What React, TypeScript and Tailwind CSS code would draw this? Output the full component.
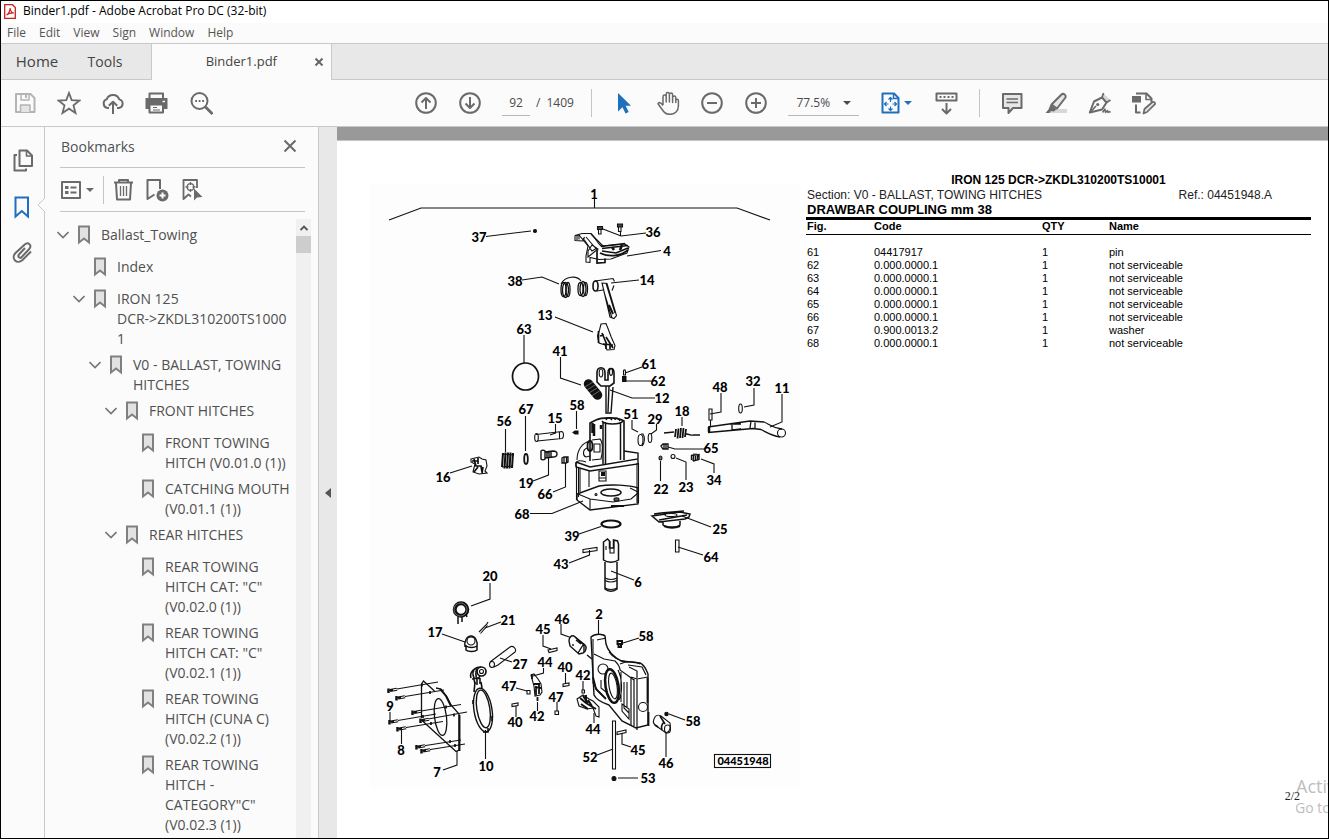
import React from "react";

type IconProps = { children: React.ReactNode; className?: string; box?: string };

function Icon({ children, className = "size-6", box = "0 0 24 24" }: IconProps) {
  return (
    <svg
      viewBox={box}
      className={`shrink-0 ${className}`}
      fill="none"
      stroke="currentColor"
      strokeWidth={2}
      strokeLinejoin="round"
      aria-hidden="true"
    >
      {children}
    </svg>
  );
}

function ToolButton({ label, children, className = "" }: { label: string; children: React.ReactNode; className?: string }) {
  return (
    <button type="button" aria-label={label} className={`flex shrink-0 items-center justify-center ${className}`}>
      {children}
    </button>
  );
}

function Toolbar() {
  return (
    <div className="flex h-[47px] shrink-0 items-center border-b border-[#c9c9c9] bg-[#fbfbfb] pl-3 text-[#6a6a6a]">
      <div className="flex gap-5">
        <ToolButton label="Save" className="text-[#b4b4b4]">
          <Icon>
            <path d="M3 3h14.500l4 4v14H3z" />
            <path d="M8 3v6h8V3" strokeWidth="1.500" />
            <path d="M13 4v3" />
            <path d="M7.500 21v-7h9.500v7" fill="#e4e4e4" strokeWidth="1.500" />
          </Icon>
        </ToolButton>
        <ToolButton label="Star">
          <Icon>
            <path d="M12 2l2.700 7.100 7.800.400-6 4.900 2 7.600-6.500-4.300L5.500 22l2-7.600-6-4.900 7.800-.400z" strokeWidth="1.800" strokeLinejoin="miter" />
          </Icon>
        </ToolButton>
        <ToolButton label="Upload to cloud">
          <Icon>
            <path d="M8 17H6.500A4.500 4.500 0 0 1 5.700 8.300 6.700 6.700 0 0 1 18.300 8.400 4.400 4.400 0 0 1 18 17h-2" />
            <path d="M12 23V11M7.800 14.800L12 10.700l4.200 4.100" />
          </Icon>
        </ToolButton>
        <ToolButton label="Print">
          <Icon>
            <path d="M4.500 8V2.500h13.500V8" />
            <path d="M.500 7h22v11h-4v-2h-14v2h-4z" fill="currentColor" stroke="none" />
            <path d="M4.500 13.500h13.500V21.500H4.500z" fill="#fbfbfb" />
            <path d="M8 16.500h4M8 19h7" strokeWidth="1.200" />
            <path d="M17.500 10.500h2.500" stroke="#fbfbfb" strokeWidth="1.500" />
          </Icon>
        </ToolButton>
        <ToolButton label="Find text">
          <Icon>
            <circle cx="10.500" cy="10" r="8" />
            <path d="M16.500 16l7 7" strokeWidth="2.800" />
            <path d="M6.200 10h1.800M9.700 10h1.800M13.200 10H15" />
          </Icon>
        </ToolButton>
      </div>

      <div className="ml-[201px] flex items-center gap-5">
        <ToolButton label="Previous page">
          <Icon>
            <circle cx="12" cy="12" r="9.800" />
            <path d="M12 18V7M7.500 11.500L12 7l4.500 4.500" />
          </Icon>
        </ToolButton>
        <ToolButton label="Next page">
          <Icon>
            <circle cx="12" cy="12" r="9.800" />
            <path d="M12 6v11M7.500 12.500L12 17l4.500-4.500" />
          </Icon>
        </ToolButton>
      </div>
      <div className="ml-5 flex items-center text-[12px] text-[#4a4a4a]">
        <input
          aria-label="Page number"
          defaultValue="92"
          className="h-[26px] w-7 border-b border-[#b8b8b8] bg-transparent text-center outline-none"
        />
        <span className="ml-1.5">/</span>
        <span className="ml-1.5 w-7">1409</span>
      </div>
      <div className="ml-[17px] h-7 w-px bg-[#c4c4c4]" />

      <div className="ml-5 flex items-center gap-5">
        <ToolButton label="Select" className="text-[#1f6fbf]">
          <Icon>
            <path d="M6 2v18.500l4.500-4.300 3 6.300 3.200-1.500-3-6.200H19z" fill="currentColor" stroke="none" />
          </Icon>
        </ToolButton>
        <ToolButton label="Hand">
          <Icon>
            <path
              d="M7 14V5.700a1.600 1.600 0 0 1 3.200 0V11V3.200a1.600 1.600 0 0 1 3.200 0V11V3.700a1.600 1.600 0 0 1 3.200 0V11.500V6.700a1.600 1.600 0 0 1 3.200 0V11.500V9.500a1.300 1.300 0 0 1 2.600 0V15c0 5-3.500 8.300-8.300 8.300-3.700 0-6-1.600-7.600-4.300L2 12.800c.800-1.900 2.900-1.600 5 1.700"
              strokeWidth="1.500"
            />
          </Icon>
        </ToolButton>
        <ToolButton label="Zoom out">
          <Icon>
            <circle cx="12" cy="12" r="9.800" />
            <path d="M7 12h10" />
          </Icon>
        </ToolButton>
        <ToolButton label="Zoom in">
          <Icon>
            <circle cx="12" cy="12" r="9.800" />
            <path d="M7 12h10M12 7v10" />
          </Icon>
        </ToolButton>
      </div>
      <button type="button" aria-label="Zoom level" className="ml-5 flex h-[26px] w-[71px] items-center justify-between border-b border-[#b8b8b8] px-2 text-[12px] text-[#4a4a4a]">
        77.5%
        <Caret />
      </button>

      <button type="button" aria-label="Fit page" className="ml-5 flex items-center gap-px text-[#1f6fbf]">
        <Icon>
          <path d="M3.500 2.500H15L19.500 7V21.500h-16z" />
          <path d="M14.500 2.500V7.500h5" strokeWidth="1.500" />
          <path
            d="M11.500 11V6.500M9.500 8.500l2-2 2 2M11.500 15.500V19M9.500 17.500l2 2 2-2M9.500 13H5.500M7.500 11l-2 2 2 2M13.500 13h4M15.500 11l2 2-2 2"
            strokeWidth="1.200"
          />
        </Icon>
        <Caret />
      </button>
      <ToolButton label="Scroll mode" className="ml-[23px]">
        <Icon>
          <path d="M1.500 2.500h20v7h-20z" />
          <path d="M4.500 6h14" strokeDasharray="2 2" />
          <path d="M11.500 12v10M7 18l4.500 4.500L16 18" />
        </Icon>
      </ToolButton>
      <div className="ml-5 h-7 w-px bg-[#c4c4c4]" />
      <div className="ml-5 flex items-center gap-5">
        <ToolButton label="Add comment">
          <Icon>
            <path d="M3 3h18.500v14H13l-4.500 5v-5H3z" fill="#e6e6e6" />
            <path d="M6.500 8h11.500M6.500 11.500h11.500" strokeWidth="1.300" />
          </Icon>
        </ToolButton>
        <ToolButton label="Highlight">
          <Icon>
            <path d="M8 18h15v4H5z" fill="#d8d8d8" stroke="none" />
            <path d="M17.500 3.500c2-1.600 5 .600 4 3L13 17.500l-5.500-4z" fill="#e6e6e6" />
            <path d="M6.500 13.500l6 4.500-2.500 2.500-3-.500-1.500 2H1.500l3-3.500z" fill="currentColor" stroke="none" />
          </Icon>
        </ToolButton>
        <ToolButton label="Sign">
          <Icon>
            <path d="M15.500 2.500l6.500 6-3 2-5-4.500z" fill="#d8d8d8" stroke="none" />
            <path d="M1.800 21.500L6 10.500l8-4 4.500 5-4.500 7z" />
            <path d="M14 6.500l1.500-4.500M18.500 11.500l4-2.500M2 21.500l6-6.500" strokeWidth="1.700" />
            <circle cx="9.700" cy="13.500" r="1.600" fill="currentColor" stroke="none" />
            <path d="M14.500 21.500l2.500-3.500.500 3.500 2-2 .500 2 1.500-1 1 1" strokeWidth="1.500" />
          </Icon>
        </ToolButton>
        <ToolButton label="More tools">
          <Icon>
            <path d="M4 2.500h10.500l5 5V11M4 13.500v8h4.500" />
            <path d="M14 2.500v6h5.500" strokeWidth="1.600" />
            <path d="M0 5h9v6.500H0z" fill="currentColor" stroke="none" />
            <path d="M11.500 22.500l1-4.500 8-7c1.500-.500 3 .800 2.500 2.200L15 21z" fill="#e6e6e6" strokeWidth="1.700" />
          </Icon>
        </ToolButton>
      </div>
    </div>
  );
}

function Caret() {
  return (
    <svg viewBox="0 0 8 5" className="h-1 w-2 shrink-0" preserveAspectRatio="none" aria-hidden="true">
      <path d="M0 0h8L4 5z" fill="currentColor" />
    </svg>
  );
}

type Bookmark = { level: 0 | 1 | 2 | 3 | 4; open?: boolean; text: string };

const bookmarks: Bookmark[] = [
  { level: 0, open: true, text: "Ballast_Towing" },
  { level: 1, text: "Index" },
  { level: 1, open: true, text: "IRON 125\nDCR->ZKDL310200TS1000\n1" },
  { level: 2, open: true, text: "V0 - BALLAST, TOWING\nHITCHES" },
  { level: 3, open: true, text: "FRONT HITCHES" },
  { level: 4, text: "FRONT TOWING\nHITCH (V0.01.0 (1))" },
  { level: 4, text: "CATCHING MOUTH\n(V0.01.1 (1))" },
  { level: 3, open: true, text: "REAR HITCHES" },
  { level: 4, text: 'REAR TOWING\nHITCH CAT: "C"\n(V0.02.0 (1))' },
  { level: 4, text: 'REAR TOWING\nHITCH CAT: "C"\n(V0.02.1 (1))' },
  { level: 4, text: "REAR TOWING\nHITCH (CUNA C)\n(V0.02.2 (1))" },
  { level: 4, text: 'REAR TOWING\nHITCH -\nCATEGORY"C"\n(V0.02.3 (1))' },
];

const indents = ["pl-0", "pl-4", "pl-8", "pl-12", "pl-16"];

function BookmarkRow({ level, open, text }: Bookmark) {
  return (
    <li className={`flex min-h-8 items-start py-[3px] ${indents[level]}`}>
      <span className="flex h-5 w-[21px] shrink-0 items-center">
        {open && (
          <button type="button" aria-label="Collapse">
            <svg viewBox="0 0 12 8" className="h-2 w-3 text-[#777]" fill="none" stroke="currentColor" strokeWidth="1.600" aria-hidden="true">
              <path d="M.500 1L6 6.500 11.500 1" />
            </svg>
          </button>
        )}
      </span>
      <svg viewBox="0 0 12 20" className="h-5 w-3 shrink-0" fill="#e2e2e2" stroke="#808080" strokeWidth="2" aria-hidden="true">
        <path d="M1 1.500h10V17.500l-5-4-5 4z" />
      </svg>
      <a href="#" className="ml-[11px] whitespace-pre text-[14px] leading-5 text-[#505050]">
        {text}
      </a>
    </li>
  );
}

function SidePanel() {
  return (
    <aside className="flex w-[273px] shrink-0 flex-col overflow-hidden bg-[#fbfbfb] text-[#6a6a6a]">
      <div className="mr-[13px] ml-[15px] flex h-[41px] shrink-0 items-center justify-between border-b border-[#c4c4c4] pr-2 pb-0.5 pl-px">
        <h2 className="text-[14px] text-[#505050]">Bookmarks</h2>
        <ToolButton label="Close panel">
          <Icon className="h-3.5 w-3.5" box="0 0 14 14">
            <path d="M1.500 1.500l11 11M12.500 1.500l-11 11" />
          </Icon>
        </ToolButton>
      </div>
      <div className="mr-[13px] ml-[15px] flex h-11 shrink-0 items-center border-b border-[#c4c4c4]">
        <button type="button" aria-label="Options" className="flex items-center gap-1">
          <Icon className="h-6 w-[22px]" box="0 0 22 24">
            <path d="M2 4h18v16H2z" />
            <path d="M5 9.500h3.500M5 14.500h3.500" strokeWidth="3" />
            <path d="M10.500 9.500h6M10.500 14.500h6" />
          </Icon>
          <Caret />
        </button>
        <div className="mr-2 ml-[9px] h-7 w-px bg-[#c4c4c4]" />
        <div className="flex gap-2.5">
          <ToolButton label="Delete">
            <Icon>
              <path d="M2 4.500h19" />
              <path d="M7 4.500V2h9v2.500" />
              <path d="M4 5l1 16.500h13L19 5" />
              <path d="M8.500 8V18M11.500 8V18M14.500 8V18" strokeWidth="1.300" />
            </Icon>
          </ToolButton>
          <ToolButton label="New bookmark">
            <Icon>
              <path d="M8.500 16.500L1.500 21V2h12.500v9" />
              <circle cx="16.500" cy="17.500" r="6" fill="currentColor" stroke="none" />
              <path d="M13.500 17.500h6M16.500 14.500v6" stroke="#fbfbfb" />
            </Icon>
          </ToolButton>
          <ToolButton label="Find current bookmark">
            <Icon>
              <path d="M17 10V2H3.500v19l5-4.500 2.500 2" strokeWidth="1.800" />
              <circle cx="10.500" cy="9" r="3.300" strokeWidth="1.300" />
              <path d="M10.500 4v3M10.500 11v3M5.500 9h3M12.500 9h3" strokeWidth="1.300" />
              <path d="M14 10.500v12l3-3 5.500-.500z" fill="currentColor" stroke="none" />
            </Icon>
          </ToolButton>
        </div>
      </div>
      <div className="flex min-h-0 flex-1 pt-[7px]">
        <ul className="min-w-0 flex-1 overflow-hidden pt-[3px] pl-3">
          {bookmarks.map((b, i) => (
            <BookmarkRow key={i} {...b} />
          ))}
        </ul>
        <div className="mr-[7px] flex w-[15px] flex-col bg-[#f0f0f0]">
          <button type="button" aria-label="Scroll up" className="flex h-[17px] items-center justify-center">
            <svg viewBox="0 0 8 6" className="h-1.5 w-2" fill="none" stroke="#505050" strokeWidth="1.800" aria-hidden="true">
              <path d="M.500 5L4 1.500 7.500 5" />
            </svg>
          </button>
          <div className="h-[17px] bg-[#cdcdcd]" />
        </div>
      </div>
    </aside>
  );
}

function Rail() {
  return (
    <nav className="flex w-11 shrink-0 flex-col items-center gap-[22px] border-r border-[#c9c9c9] bg-[#fbfbfb] pt-[22px] text-[#6a6a6a]">
      <ToolButton label="Page thumbnails">
        <Icon>
          <path d="M8.500 1.500h7.500l5 5V17H8.500z" />
          <path d="M15.500 1.500v5.500H21" strokeWidth="1.600" />
          <path d="M6 6H3.500v15.500h11.500V19.500" />
        </Icon>
      </ToolButton>
      <div className="relative flex w-full justify-center">
        <ToolButton label="Bookmarks" className="text-[#1f6fbf]">
          <Icon>
            <path d="M4.500 2.500h12.500v19l-6.200-5.500-6.300 5.500z" strokeLinejoin="miter" />
          </Icon>
        </ToolButton>
        <svg viewBox="0 0 8 14" className="absolute top-[3px] -right-px h-3.5 w-2" aria-hidden="true">
          <path d="M8 0L1 7l7 7" fill="#fbfbfb" stroke="#c9c9c9" />
        </svg>
      </div>
      <ToolButton label="Attachments">
        <Icon>
          <path
            d="M14 7l-6 6.500c-2 2.300.800 4.500 2.700 2.500l7.500-8c3.500-4-1.200-7.500-4.700-4.300L4.500 12c-5 5.500 1.500 12 7 7L20 10.500"
            strokeWidth="2"
          />
        </Icon>
      </ToolButton>
    </nav>
  );
}

const labels: [string, number, number][] = [
  ["1", 594, 194], ["37", 479, 237], ["36", 653, 232], ["4", 667, 251], ["38", 515, 281], ["14", 647, 280],
  ["13", 545, 315], ["63", 524, 329], ["41", 560, 351], ["61", 649, 364], ["62", 658, 381], ["12", 662, 398],
  ["58", 577, 405], ["15", 555, 418], ["67", 526, 409], ["56", 504, 421], ["51", 631, 414], ["29", 655, 419],
  ["18", 682, 411], ["48", 720, 387], ["32", 753, 381], ["11", 782, 388], ["16", 443, 477], ["19", 526, 483],
  ["66", 545, 494], ["65", 711, 448], ["22", 661, 489], ["23", 686, 487], ["34", 714, 480], ["68", 522, 514],
  ["25", 720, 529], ["39", 572, 536], ["43", 561, 564], ["64", 711, 557], ["6", 638, 582], ["20", 490, 576],
  ["2", 599, 614], ["21", 508, 620], ["17", 435, 632], ["46", 562, 619], ["45", 543, 629], ["58", 646, 636],
  ["44", 545, 662], ["40", 565, 667], ["42", 583, 675], ["27", 520, 664], ["47", 509, 686], ["47", 556, 697],
  ["42", 537, 716], ["40", 515, 722], ["9", 390, 706], ["8", 401, 750], ["10", 486, 766], ["7", 437, 772],
  ["44", 593, 729], ["58", 693, 721], ["45", 638, 750], ["46", 666, 763], ["52", 590, 757], ["53", 648, 778],
];

const leaders =
  "M389 220L421 208H737L770 220M594.500 199V208M486 236.500L531 231M646 233L621 236 603 229M620.500 232V236M661 250.500L627 256M522 280L542 277 559 284M639 280L611 283M555 317L593 332M524 335V363M560.500 357V378L581 385M642 367L625 373M651 381H626M655 398H632L610 390M576.500 411V429M555.500 424V433L550 435M525.500 416V451M505.500 429V452M632 420V429L638 432M656.500 424V430L651 434M682 417V426M721 393V412L710 414M754 388V405L744 407M782 394V422L770 427M450 473L472 466M533 481L548.500 475V458M553 492L565.500 487V463M705 449H675L668 447M660.500 481V461M686 480V462L676 458M714 473V464L701 459M530 513.500H552L583 501M711 527L682 516M579 534L601 526.500M569 563L589.500 555V550M703 555L678 547M634 580L611 571M490 583V599L471 606M598.500 620V636M501 622L485 628M442 634L465 642M561 624V634L572 638M543 635V646L551 649M639 638L623 643M543.500 668V673L533 676M565.500 673V683M583 681V690M512 662L500 658M516 688L527 691M557 702V711M537.500 711V702M516 717V706M390 712V721M401.500 744V730M485.500 759V730M443 770L457 765V751M594 723V713M685 720L669 714M631 747L622 744V733M666 757V730M597 755L613 749M638 778H618";

const plateBolts: [number, number, number, number][] = [
  [388, 690.5, 438, 682], [396, 698, 444, 690], [412, 712.5, 461, 704.5], [389, 722, 436, 714],
  [420, 720.5, 467, 712], [397, 729, 443, 721.5], [416, 747, 461, 740], [421, 751, 465, 744],
];

function PartsDrawing() {
  return (
    <svg viewBox="370 184 430 604" className="h-[604px] w-[430px] shrink-0" role="img" aria-label="Exploded view of the drawbar coupling">
      <rect x="370" y="184" width="430" height="604" fill="#fdfdfd" />
      <g fill="none" stroke="#111" strokeWidth="1.100">
        <path d={leaders} />
        {/* 37, 36: screws */}
        <circle cx="535" cy="231" r="1.500" fill="#111" />
        <path d="M597.500 226.500h5v3h-5zM617.500 224h5v3h-5z" fill="#444" />
        <path d="M598.500 229.500v4.500h2.500v-4.500M618.500 227v4.500h2.500v-4.500" />
        {/* 4: lever plate */}
        <path d="M575 235.500l7-2h9c4 4 6 9 10 12.500l24-2 4 3-2 6-16 6-12 .500-9-2v5l-4-.500v-6l2-10-9-11-4 .500z" />
        <path d="M575 235.500v5l8 .500 1.500-4M577 235v5M579 234.500v5M583 238l9 13 5-3M586 237l12 14M591 234l13 13M588 251l4-6 6 4-10 8z" />
        <path d="M601 246.500l24-3M602 248.500l26-3M600 253c8 4 20 4 28-3M602 251l14 2 12-5M597 251v12l8-.500v-4" strokeWidth="1.700" />
        <path d="M612 247l2 3M622 245l-2 5" strokeWidth="2.500" />
        {/* 38: double spring */}
        <path d="M561 284c4-8 16-9 20-3" />
        <g strokeWidth="1.300">
          <ellipse cx="563.500" cy="289.500" rx="2.500" ry="7" />
          <ellipse cx="565.500" cy="290" rx="3" ry="7.500" />
          <ellipse cx="568" cy="289.500" rx="2" ry="7" />
          <ellipse cx="580.500" cy="289" rx="2.500" ry="6.500" />
          <ellipse cx="583" cy="289" rx="3" ry="7.500" />
          <ellipse cx="585.500" cy="289" rx="2" ry="6.500" />
        </g>
        {/* 14: arm */}
        <ellipse cx="595.500" cy="286" rx="2.500" ry="5" strokeWidth="1.600" />
        <path d="M595 281l18-2.500 1.500 3M597 291l6-1M612 290.500l2-5M602 283l8 34 4 1.500 2.500-3-9.500-32zM606 283l9 30M604 292l8 26" />
        <path d="M609 305l4 9" strokeWidth="2" />
        {/* 13: pawl */}
        <path d="M601 324l5-.500 2 5 3 8 4 9-1 4-7 .500-2-5-6-2-1.500-7 2-6z" />
        <path d="M598.500 331v12M602 333l5 12M606 337l7 11M600 336l4-1M603 344l10 1M606 345v4M610 343v6" strokeWidth="1.700" />
        {/* 63: ring */}
        <ellipse cx="525.500" cy="376.500" rx="13" ry="13.500" strokeWidth="1.700" />
        {/* 41: spring */}
        <path d="M588.500 384l9 11" strokeWidth="9.500" strokeLinecap="round" />
        <path d="M585 387l8-5M587 390l8-5M589 393l8-5M591.500 396l8-5" strokeWidth=".500" stroke="#bbb" />
        {/* 12: fork rod */}
        <path d="M597 373c0-7 8-7 8 0v7h3v-7c0-6 6-6 6 0v10l-4 3h-9l-4-4z" strokeWidth="1.600" />
        <ellipse cx="601" cy="373" rx="1.800" ry="4" />
        <ellipse cx="611" cy="372" rx="1.500" ry="3.500" />
        <path d="M606 386v27h5l2-26M609 386l-1 26" strokeWidth="1.400" />
        {/* 61, 62: pin and spring */}
        <path d="M623.500 371c0-1.500 2-1.500 2 0v4h-2z" />
        <path d="M622 377h4.500M622 379h4.500M622 381h4.500" strokeWidth="1.800" />
        {/* 15: pin */}
        <path d="M536 434.500l26-3M537 441l25-2.500M562 431.500c2 1 2 6 0 7M559.500 432v6.500" />
        <ellipse cx="536.500" cy="437.500" rx="1.800" ry="4" />
        {/* 58: nipple */}
        <path d="M573 432.500l2-1.500h3v3h-3z" fill="#111" />
        {/* 67: washer */}
        <ellipse cx="526" cy="459" rx="1.800" ry="5" strokeWidth="1.800" />
        {/* 56: spring */}
        <path d="M503 453l-1 14M505.500 452.500l-1 16M508 452.500l-1 16M510.500 452.500l-1 16M513 453l-1 15" strokeWidth="2" />
        <path d="M502 454l12 1M502 467l11-1" />
        {/* 16: detent */}
        <path d="M471 459l8-2 3 2 4 1 1 6-2 5 2 2-8 1-6-2 2-8-4-2z" fill="#fff" />
        <path d="M474 459l2 7h5l1 6M478 458v6M472 461h6M474 472l4-5M483 467l-1 6" strokeWidth="1.700" />
        {/* 19: bolt */}
        <path d="M541 451c1-1 3-1 4 0v8c-1 1-3 1-4 0zM545 452l8-1c3 0 4 1.500 4 3s-1 3-4 3l-8 1M547 452v6M549 451.500v6M551 451.500v6" strokeWidth="1.400" />
        {/* 66, 65: bushings */}
        <path d="M562 458l2-1h4v5l-2 1h-4zM564 457v6M566.500 457v6M661 446l2-2h5v5h-5zM664 444v5M666 444v5" strokeWidth="1.300" />
        {/* 68: coupling body */}
        <path d="M590 461v-38l6-3c6-3 22-3 28 1v39" strokeWidth="1.600" fill="#fff" />
        <path d="M603 422v42M605.500 422v42M620.500 422v38M602 421c3 4 18 4 21 0M606 420c1-3 4-3 6 0M615 420c0-3 4-2 5 1" strokeWidth="1.500" />
        <path d="M594 424v12M592.500 423v10M601 425v4" strokeWidth="2.500" />
        <path d="M586 462c-6-2-11-2-10 4M590 441c-8 2-13 9-13 19M587 448c-5 2-4 8-1 9l4-1M592 440l8-1c3 3 3 12 1 20l-9 1M594 444h6v8h-6z" />
        <ellipse cx="590" cy="446" rx="2.500" ry="5" strokeWidth="1.800" />
        <path d="M576 462l14 5 48-8v-6l-14-2M576 462v5l14 4 48-7v-5" strokeWidth="1.400" />
        <path d="M576.500 466v34M578.500 467v30M580 468v24M589 471v16M637 463v40M638.500 463v40" />
        <path d="M599 471h7v10h-7zM599 478h7" />
        <path d="M601 473h4M601 475h4" strokeWidth="2" />
        <path d="M577 500v-6l22-8c12-2 30-1 39 2v16l-48 6z" strokeWidth="1.400" />
        <path d="M578 494l12 5 23 3 18-3 7-6M590 499v10M630 488l8 4" />
        <ellipse cx="611" cy="492.500" rx="10" ry="3.500" strokeWidth="1.500" />
        <circle cx="596" cy="494.500" r="1" />
        <ellipse cx="616.500" cy="499.500" rx="2.500" ry="1.800" fill="#555" />
        <path d="M611 506h13" strokeWidth="2" />
        {/* 51, 29, 18 */}
        <ellipse cx="640.500" cy="440" rx="2.500" ry="5.500" />
        <path d="M641 434h2c2 3 2 9-1 12" />
        <ellipse cx="650" cy="438" rx="1.800" ry="4.500" />
        <path d="M664 433l10-1M686 434c4 0 5 2 7 1h7" strokeWidth="1.300" />
        <path d="M676 429l-1 8M678.500 428.500l-1 10M681 428l-1 10M683.500 428l-1 10M686 429l-1 8" strokeWidth="1.800" />
        {/* 48, 32, 11 */}
        <path d="M709 409h3v11h-3zM710.500 420v6" />
        <ellipse cx="740.500" cy="408.500" rx="1.800" ry="4.500" />
        <path d="M708 427l42-6 14 1c5 2 8 6 18 7M708 432.500l45-4 8 1c6 3 10 6 19 7.500M732 424v6l9-1M751 421l-1 7M755 421v7M733 424h8" strokeWidth="1.300" />
        <path d="M709 427v5" strokeWidth="2.500" />
        <circle cx="781.500" cy="433" r="4" />
        {/* 22, 23, 34 */}
        <ellipse cx="660.500" cy="458" rx="1.500" ry="2" fill="#777" />
        <circle cx="673" cy="456.500" r="2" />
        <path d="M691.500 455v5M694 453.500l-1 7.500M696 453.500l-1 8M698 454l-1 7M691 455.500l8-1v5l-6 1.500" strokeWidth="1.400" />
        {/* 39: ring */}
        <ellipse cx="611" cy="524" rx="9.500" ry="3.500" strokeWidth="2.200" />
        {/* 25: flange */}
        <path d="M652 516l28-4 10 2-1 3-4 2-26 3zM654 514l7-1 23-2M663 522v3c4 3 14 3 17 0v-4M659 520l28-5" strokeWidth="1.500" />
        <ellipse cx="671" cy="515" rx="6" ry="1.500" fill="#fff" />
        <path d="M664 526c5 2 11 2 16 0" strokeWidth="2.200" />
        {/* 43, 64 */}
        <path d="M583 549.500l14-2v3l-14 2zM675.500 540h3.500v12h-3.500z" />
        {/* 6: pivot pin */}
        <path d="M603.500 560v-18l4-3 2 2v7h4v-8l4 1 1 3v16c-4 3-11 3-15 0zM605 562v27c3 3 9 3 12 0v-27" strokeWidth="1.500" />
        <path d="M610 541v12h4v-12M606 546v4M605 578c4 2 8 2 12 0M605 580.500c4 2 8 2 12 0M605 588c3 2 9 2 12 0" />
        {/* 20: torsion spring */}
        <circle cx="461" cy="609.500" r="6.300" strokeWidth="4" />
        <circle cx="460.500" cy="609.500" r="6.500" stroke="#bbb" strokeWidth=".500" />
        <path d="M458 617v7M462 617v5M466 614l1 3" strokeWidth="1.500" />
        {/* 21, 17, 27 */}
        <path d="M479 632l8-8 1-2M480.500 633.500l7-8" />
        <circle cx="471" cy="641" r="4" />
        <path d="M465 647c-1-6 2-11 6-11s7 5 6 11M466 645v5c2 2 9 2 11 0v-5M466 646c3 2 8 2 11 0" strokeWidth="1.500" />
        <path d="M490 662l20-15c3-2 7 2 5 5l-17 13-4 2" />
        <ellipse cx="492" cy="664.500" rx="2.500" ry="3" />
        {/* 10: ring lever */}
        <circle cx="481.500" cy="671.500" r="4.500" strokeWidth="1.700" />
        <circle cx="481.500" cy="671.500" r="2" />
        <path d="M471 678c-2-6 4-11 10-11M472 679l6-1M474 670c-2 3-1 7 1 9M477 669c-2 3-1 8 0 10M480 676l-2 3M474 679l1 5M477 679v6M480 678v6" strokeWidth="1.600" />
        <ellipse cx="483" cy="710" rx="9" ry="22" transform="rotate(-9 483 710)" strokeWidth="1.400" />
        <ellipse cx="483.500" cy="709" rx="6.500" ry="19" transform="rotate(-9 483 710)" strokeWidth="1.400" />
        <path d="M475 682l-1 10M481 682l1 6M473 700v4M492 716v5M488 728v4h-5" strokeWidth="1.600" />
        {/* 7: plate with 8 and 9 bolts */}
        <path d="M421.500 718V684l2-3 11 10M436 688l5 1 6 8 4 8 8 9v36l-3 1.500-34-31" strokeWidth="1.300" />
        <path d="M440 689l6 7 5 10M459.500 715v36" strokeWidth="1.900" />
        <ellipse cx="440.500" cy="717" rx="6" ry="18.500" transform="rotate(-7 440 717)" strokeWidth="1.300" />
        {plateBolts.map(([x1, y1, x2, y2]) => (
          <g key={`${x1}-${y1}`}>
            <path d={`M${x1} ${y1}L${x2} ${y2}`} />
            <path d={`M${x1 + 0.5} ${y1 - 2}v4.500`} strokeWidth="2.500" />
            <path d={`M${x1 + 2} ${y1}l7-1.300`} strokeWidth="3" />
            <path d={`M${x1 + 5} ${y1 - 0.5}l4-.800`} strokeWidth="1" stroke="#fff" />
            <path d={`M${x1 + 34} ${y1 - 7}v3`} strokeWidth="1.700" />
          </g>
        ))}
        {/* 45, 46: upper pins */}
        <path d="M548 650l9-2v2.500l-8 2z" />
        <path d="M569 641c0-3 2-6 5-5l11 9c2 2 1 7-2 8l-4 1-9-8z" fill="#fff" strokeWidth="1.400" />
        <path d="M575 637l9 8v7M583 645l-5 8M587 655l5 4M573 644v2M576 640l5 4" strokeWidth="1.400" />
        {/* 44, 42, 40, 47: latches and small pins */}
        <path d="M531 675l3-1 4 5 3 5 1 8-2 3-5 1-1-10z" />
        <path d="M532 674v5M534 684h6M535 687l6 1M536 686v9M539 683v11M537.500 697v4" strokeWidth="1.800" />
        <path d="M563 684l6-1v2.500l-6 1zM512 704l6-1v2.500l-6 1zM527 690.500h3v3.500h-3zM555 711h3.500v3.500h-3.500zM582 690h2.500v3h-2.500z" />
        <path d="M577 699l6-4 6 4 4 2 6 6v10l-3-1-3-8-6 1-8-3z" />
        <path d="M580 698l6 5 10 6M583 696l5 7M581 704l7 5M588 700l4 6M586 695v6" strokeWidth="2" />
        {/* 2: housing */}
        <path d="M591 637c4-4 12-3 14-1l1 8c2 8 8 13 15 17l19 2c5 2 6 7 8 11v51l-12 3-14-7-13-16c-6-2-13-6-15-10z" fill="#fff" strokeWidth="1.400" />
        <path d="M593 639v44l5 8 5 5M597 640c3-1 7-1 9-2M594 654l10 5 11 2c4 4 5 7 5 9l14 10M609 652c4 6 10 9 19 10" />
        <path d="M631 677l6 2 11-2M631 677v48M637 679v51M634 679v47M620 664c6-3 15-3 20 0M628 665l14 2 4 8M629 667l8 4v7" strokeWidth="1.200" />
        <circle cx="603" cy="669" r="5" />
        <ellipse cx="612" cy="686" rx="6.500" ry="17" transform="rotate(-9 612 686)" strokeWidth="2.500" fill="#fff" />
        <ellipse cx="613" cy="686" rx="4" ry="13" transform="rotate(-9 613 686)" />
        <circle cx="643" cy="707" r="4.500" />
        <path d="M618 670c4 8 5 22 1 30M621 672v30M624 682v26l5 5M627 682v26M601 680v8l5 4M622 704l7 5v10l-7-8z" />
        <path d="M648.500 712v14M593 677l3 12 10 10M647.500 678v25" strokeWidth="1.800" />
        {/* 58: nipples */}
        <path d="M617.500 641h4.500v3h-4.500zM618.500 645v2h2.500v-2" strokeWidth="2" />
        <circle cx="666.500" cy="714" r="1.700" fill="#111" />
        {/* 46: lower pin */}
        <path d="M655 717c2-3 4-2 6-1l9 7c1 4 0 9-4 10l-11-8c-2-2-2-5 0-8z" fill="#fff" />
        <path d="M660 716l5 8M664 722c-2 2-3 5-2 8M655 725l3 2" strokeWidth="1.600" />
        <ellipse cx="667.500" cy="729" rx="3" ry="4" />
        {/* 45, 52, 53 */}
        <path d="M617 732l9-2v2.500l-9 2z" />
        <path d="M612.500 721h3v48h-3z" />
        <circle cx="614" cy="778.500" r="2" fill="#111" />
        <rect x="714.500" y="754.500" width="56" height="13" />
      </g>
      <g fill="#000" fontFamily="Lato, sans-serif" fontWeight="900" fontSize="13" textAnchor="middle">
        {labels.map(([t, x, y]) => (
          <text key={`${t}-${x}-${y}`} x={x} y={y + 5}>
            {t}
          </text>
        ))}
        <text x="743" y="765" fontSize="11">
          04451948
        </text>
      </g>
    </svg>
  );
}

const parts: [string, string, string, string][] = [
  ["61", "04417917", "1", "pin"],
  ["62", "0.000.0000.1", "1", "not serviceable"],
  ["63", "0.000.0000.1", "1", "not serviceable"],
  ["64", "0.000.0000.1", "1", "not serviceable"],
  ["65", "0.000.0000.1", "1", "not serviceable"],
  ["66", "0.000.0000.1", "1", "not serviceable"],
  ["67", "0.900.0013.2", "1", "washer"],
  ["68", "0.000.0000.1", "1", "not serviceable"],
];

function DocumentPage() {
  return (
    <main className="relative flex min-w-0 flex-1 flex-col overflow-hidden bg-white">
      <div className="h-[14px] shrink-0 border-b border-[#c4c4c4] bg-[#999]" />
      <div className="flex gap-1.5 pt-[43px] pr-[17px] pl-[33px]">
        <PartsDrawing />
        <section className="-mt-[11px] min-w-0 flex-1 font-['Liberation_Sans',Arial,sans-serif] text-[11px] text-black">
          <h1 className="text-center text-[12px] leading-[15px] font-bold">IRON 125 DCR-&gt;ZKDL310200TS10001</h1>
          <div className="flex justify-between pr-[39px] pl-px text-[12px] leading-[15px] text-[#222]">
            <span>Section: V0 - BALLAST, TOWING HITCHES</span>
            <span>Ref.: 04451948.A</span>
          </div>
          <h2 className="pl-px text-[13px] leading-[14px] font-bold">DRAWBAR COUPLING mm 38</h2>
          <table className="w-full table-fixed border-collapse border-t-[3px] border-black text-left leading-[13px]">
            <colgroup>
              <col className="w-[67px]" />
              <col className="w-[168px]" />
              <col className="w-[67px]" />
              <col />
            </colgroup>
            <thead>
              <tr className="h-4 border-b border-black">
                <th className="p-0 pl-px align-top">Fig.</th>
                <th className="p-0 pl-px align-top">Code</th>
                <th className="p-0 pl-px align-top">QTY</th>
                <th className="p-0 pl-px align-top">Name</th>
              </tr>
            </thead>
            <tbody>
              {parts.map((row, i) => (
                <tr key={row[0]}>
                  {row.map((cell, c) => (
                    <td key={c} className={i ? "p-0 pl-px" : "p-0 pt-[11px] pl-px"}>
                      {cell}
                    </td>
                  ))}
                </tr>
              ))}
            </tbody>
          </table>
        </section>
      </div>
      <div className="absolute right-0 bottom-5 w-8 overflow-hidden whitespace-nowrap text-[#bdbdbd]">
        <p className="text-[18px] leading-6">Activate Windows</p>
        <p className="-ml-px text-[14px] leading-5">Go to Settings to activate Windows.</p>
      </div>
      <div className="absolute right-7 bottom-[34px] font-['Liberation_Serif',serif] text-[12px] leading-4 text-[#222]">2/2</div>
    </main>
  );
}

export default function App() {
  return (
    <div className="flex h-screen flex-col overflow-hidden border border-black bg-[#fbfbfb] font-['Open_Sans','Noto_Sans',sans-serif]">
      <header className="flex h-[22px] shrink-0 items-center gap-[7px] bg-white pb-0.5 pl-[3px] text-[12px] text-black">
        <svg viewBox="0 0 12 15" className="h-[15px] w-3" fill="none" stroke="#c8201c" aria-hidden="true">
          <path d="M.700.700h7.800l2.800 2.800v10.800H.700z" fill="#fff" strokeWidth="1.300" />
          <path d="M2.500 11c2-1 4-4.500 3.500-7 .500 3 2 5 4 5-2-.300-5 .300-7.500 2z" strokeWidth="1.200" />
        </svg>
        <span>Binder1.pdf - Adobe Acrobat Pro DC (32-bit)</span>
      </header>
      <nav className="flex h-5 shrink-0 items-center gap-[13px] bg-[#fbfbfb] pl-1.5 text-[12px] text-[#555]">
        {["File", "Edit", "View", "Sign", "Window", "Help"].map((m) => (
          <button key={m} type="button">
            {m}
          </button>
        ))}
      </nav>
      <div className="flex h-[37px] shrink-0 border-y border-[#c9c9c9] bg-[#e8e8e8] text-[#444]">
        <button type="button" className="w-[72px] text-[15px]">
          Home
        </button>
        <button type="button" className="w-16 text-[14px]">
          Tools
        </button>
        <div className="-mb-px ml-3.5 flex w-[181px] items-center justify-end gap-[38px] border-x border-[#c9c9c9] bg-[#fbfbfb] pr-2 text-[13px]">
          <span>Binder1.pdf</span>
          <ToolButton label="Close tab" className="text-[#666]">
            <Icon className="h-2 w-2" box="0 0 8 8">
              <path d="M.500.500l7 7M7.500.500l-7 7" />
            </Icon>
          </ToolButton>
        </div>
      </div>
      <Toolbar />
      <div className="flex min-h-0 flex-1">
        <Rail />
        <SidePanel />
        <button type="button" aria-label="Hide panel" className="flex w-[19px] shrink-0 items-center justify-center border-l border-[#c9c9c9] bg-[#e8e8e8] pt-5">
          <svg viewBox="0 0 6 10" className="h-2.5 w-1.5" aria-hidden="true">
            <path d="M6 0v10L0 5z" fill="#555" />
          </svg>
        </button>
        <DocumentPage />
      </div>
    </div>
  );
}
